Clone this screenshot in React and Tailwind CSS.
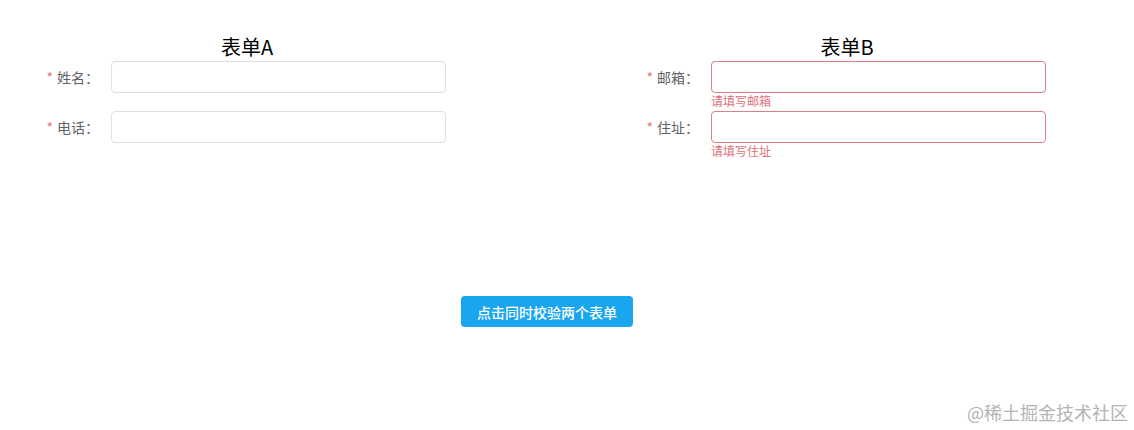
import { useState } from "react";

const font = { fontFamily: '"Noto Sans CJK SC", "Microsoft YaHei", "Liberation Sans", sans-serif' };

const FormRow = ({ label, error }) => (
  <div className="flex items-start mb-[18px]">
    <label className="w-[80px] pr-3 h-8 leading-8 text-right text-sm text-[#606266] shrink-0">
      <span className="text-[#e8767c] mr-1">*</span>
      {label}：
    </label>
    <div className="relative">
      <input
        className={`w-[335px] h-8 rounded border bg-white px-3 text-sm outline-none ${
          error ? "border-[#dc8088]" : "border-[#dcdfe6]"
        }`}
      />
      {error && (
        <div className="absolute left-0 top-full pt-[1px] text-xs leading-[14px] text-[#e07078]">
          {error}
        </div>
      )}
    </div>
  </div>
);

const FormBlock = ({ title, rows }) => (
  <div className="w-[600px] shrink-0">
    <div className="w-[494px] text-center text-xl leading-7 text-black">{title}</div>
    <div className="pl-[31px]">
      {rows.map((r) => (
        <FormRow key={r.label} label={r.label} error={r.error} />
      ))}
    </div>
  </div>
);

export default function App() {
  const [checked, setChecked] = useState(true);

  return (
    <div className="relative h-[430px] w-full bg-white overflow-hidden" style={font}>
      <div className="flex pt-[33px]">
        <FormBlock
          title="表单A"
          rows={[{ label: "姓名" }, { label: "电话" }]}
        />
        <FormBlock
          title="表单B"
          rows={[
            { label: "邮箱", error: checked ? "请填写邮箱" : "" },
            { label: "住址", error: checked ? "请填写住址" : "" },
          ]}
        />
      </div>

      <div className="mt-[135px] pl-[461px]">
        <button
          onClick={() => setChecked(true)}
          className="h-[31px] w-[172px] rounded bg-[#1aa6ee] text-sm font-medium text-white"
        >
          点击同时校验两个表单
        </button>
      </div>

      <div className="absolute right-[6px] bottom-[6px] text-lg leading-6 text-[#b4b4b4]">
        @稀土掘金技术社区
      </div>
    </div>
  );
}
